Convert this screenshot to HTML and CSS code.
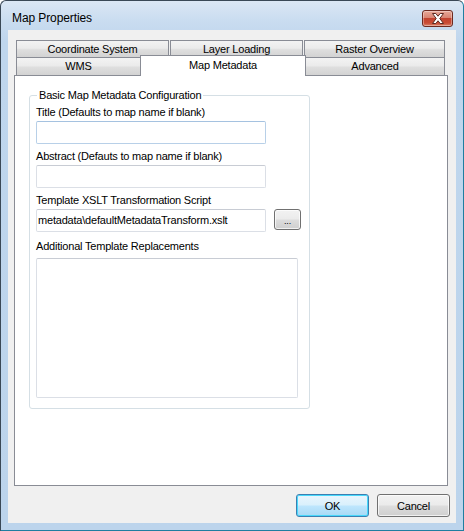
FILE: index.html
```html
<!DOCTYPE html>
<html>
<head>
<meta charset="utf-8">
<link rel="stylesheet" href="styles.css">
</head>
<body>
<div class="window">
  <div class="titlebar">
    <span class="title">Map Properties</span>
    <button class="close" aria-label="Close">
      <svg width="14" height="11" viewBox="0 0 14 11">
        <path d="M1.5 0.5 H4.8 L7 3.2 L9.2 0.5 H12.5 L8.8 5.5 L12.5 10.5 H9.2 L7 7.8 L4.8 10.5 H1.5 L5.2 5.5 Z" fill="#fff" stroke="#5a2a22" stroke-width="1" stroke-linejoin="round"/>
      </svg>
    </button>
  </div>
  <div class="client">
    <div class="tabstrip">
      <div class="tabrow">
        <div class="tab w-coord">Coordinate System</div>
        <div class="tab w-layer">Layer Loading</div>
        <div class="tab w-raster">Raster Overview</div>
      </div>
      <div class="tabrow row2">
        <div class="tab w-wms">WMS</div>
        <div class="tab selected w-meta">Map Metadata</div>
        <div class="tab w-adv">Advanced</div>
      </div>
    </div>
    <div class="panel">
      <fieldset class="group">
        <legend>Basic Map Metadata Configuration</legend>
        <div class="label l-title">Title (Defaults to map name if blank)</div>
        <div class="textbox focus"></div>
        <div class="label l-abs">Abstract (Defauts to map name if blank)</div>
        <div class="textbox"></div>
        <div class="label l-tpl">Template XSLT Transformation Script</div>
        <div class="pathrow">
          <div class="textbox value">metadata\defaultMetadataTransform.xslt</div>
          <button class="btn browse">...</button>
        </div>
        <div class="label l-add">Additional Template Replacements</div>
        <div class="textarea"></div>
      </fieldset>
    </div>
    <div class="buttons">
      <button class="btn dlg default">OK</button>
      <button class="btn dlg">Cancel</button>
    </div>
  </div>
</div>
</body>
</html>
```
FILE: styles.css
```css
* { box-sizing: border-box; }
html, body { margin: 0; padding: 0; background: #fff; }
body { font-family: "Liberation Sans", Arial, sans-serif; font-size: 11px; letter-spacing: -0.2px; color: #000; }

.window {
  width: 464px;
  height: 531px;
  border: 1px solid;
  border-color: #3a4856 #1f7ea0 #1f7ea0 #3a4856;
  border-radius: 6px 6px 0 0;
  background: linear-gradient(#dbe7f4 0px, #c9dcf0 20px, #bfd6ed 40px, #bcd4ec 100%);
  padding: 0 7px 7px 7px;
}

.titlebar {
  height: 29px;
  display: flex;
  align-items: flex-start;
  justify-content: space-between;
}
.title {
  margin-top: 10px;
  margin-left: 4px;
  font-size: 12px;
  line-height: 14px;
  letter-spacing: -0.1px;
  color: #000;
}
.close {
  margin-top: 9px;
  margin-right: 3px;
  width: 31px;
  height: 17px;
  padding: 0;
  border: 1px solid #6d2a20;
  border-radius: 3px;
  background: linear-gradient(#e8a898 0%, #d98472 45%, #c2432f 50%, #c94b34 80%, #d9836a 100%);
  box-shadow: inset 0 0 0 1px rgba(255,255,255,0.35);
  display: flex;
  align-items: center;
  justify-content: center;
}

.client {
  height: 493px;
  background: #f0f0f0;
  padding: 10px 0 0 6px;
}

.tabstrip { padding-left: 2px; }
.tabrow { display: flex; gap: 1px; height: 17px; }
.tabrow.row2 { gap: 0; height: 18px; }
.tab {
  height: 100%;
  border: 1px solid #898c95;
  border-bottom: none;
  background: linear-gradient(#f3f3f3 0%, #ebebeb 45%, #dedede 55%, #d3d3d3 100%);
  text-align: center;
  line-height: 16px;
  white-space: nowrap;
}
.row2 .tab { line-height: 17px; }
.w-coord { width: 153px; }
.w-layer { width: 133px; }
.w-raster { width: 141px; }
.w-wms { width: 124px; border-right: none; }
.w-meta { width: 166px; }
.w-adv { width: 139px; border-left: none; }
.row2 .tab.selected {
  position: relative;
  z-index: 1;
  margin-top: -2px;
  height: 21px;
  background: #fff;
  line-height: 18px;
}

.panel {
  width: 434px;
  height: 411px;
  border: 1px solid #898c95;
  background: #fff;
  padding: 0 0 0 14px;
}

.group {
  margin: 12px 0 0 0;
  width: 281px;
  border: 1px solid #d5dfe5;
  border-radius: 3px;
  padding: 3px 6px 10px 6px;
  display: flex;
  flex-direction: column;
  align-items: flex-start;
}
.group legend {
  margin-left: 1px;
  padding: 0 2px;
  line-height: 14px;
}

.label { line-height: 13px; white-space: nowrap; }
.l-title { margin-top: 1px; }
.l-abs, .l-tpl { margin-top: 6px; }
.l-add { margin-top: 8px; }

.textbox {
  width: 230px;
  height: 23px;
  margin-top: 2px;
  border: 1px solid #dbdfe6;
  border-top-color: #c8ccd4;
  border-radius: 2px;
  background: #fff;
}
.textbox.focus {
  border-color: #b8d0e8;
  border-top-color: #a5c2e0;
}
.textbox.value {
  padding-left: 1px;
  line-height: 21px;
  white-space: nowrap;
}

.pathrow { display: flex; align-items: flex-start; gap: 8px; }

.btn {
  font-family: "Liberation Sans", Arial, sans-serif;
  font-size: 11px;
  letter-spacing: -0.2px;
  color: #000;
  padding: 0;
  border: 1px solid #707070;
  border-radius: 3px;
  background: linear-gradient(#f2f2f2 0%, #ebebeb 48%, #dddddd 52%, #cfcfcf 100%);
  box-shadow: inset 0 0 0 1px rgba(255,255,255,0.7);
}
.browse {
  width: 27px;
  height: 21px;
  margin-top: 2px;
  font-size: 9px;
  line-height: 17px;
  padding-top: 3px;
}

.textarea {
  width: 262px;
  height: 140px;
  margin-top: 5px;
  border: 1px solid #dbdfe6;
  border-top-color: #c8ccd4;
  border-radius: 2px;
  background: #fff;
}

.buttons {
  display: flex;
  justify-content: flex-end;
  gap: 8px;
  margin-top: 8px;
  padding-right: 6px;
}
.dlg { width: 73px; height: 23px; }
.dlg.default {
  border-color: #3c7fb1;
  background: linear-gradient(#eaf6fd 0%, #d9f0fc 48%, #bee6fd 52%, #a7d9f5 100%);
  box-shadow: inset 0 0 0 1px #48d8fb;
}
```
